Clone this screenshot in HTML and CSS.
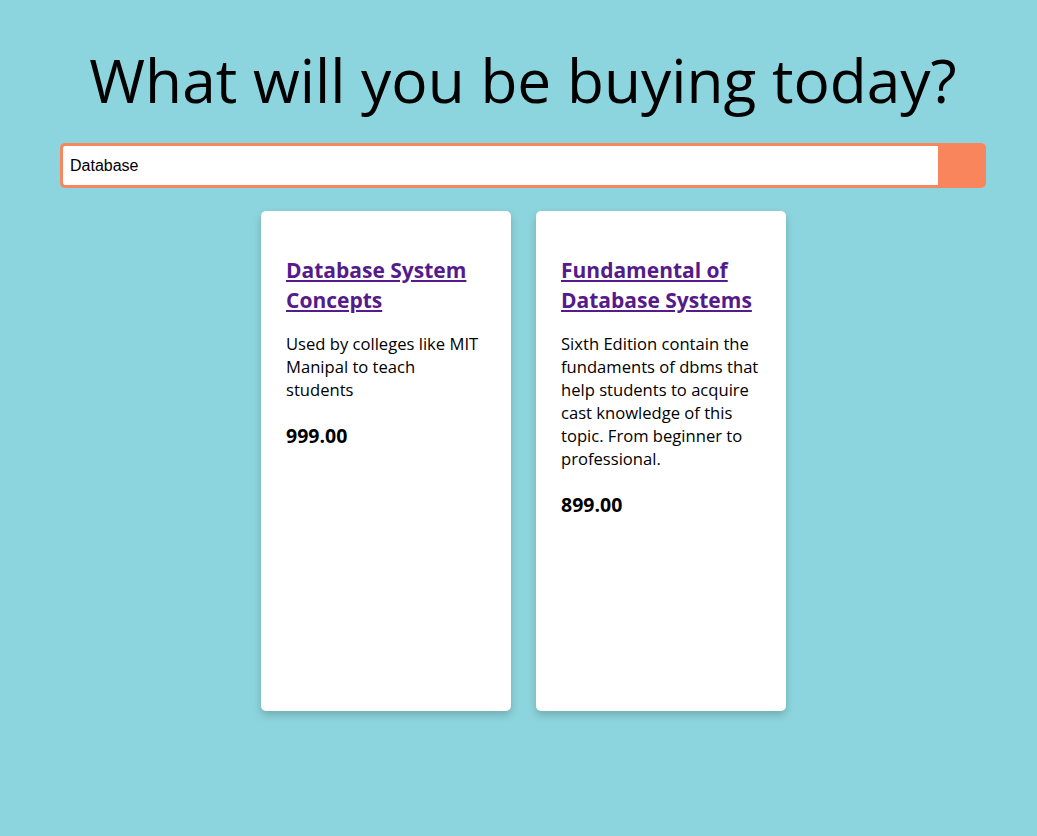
FILE: index.html
```html
<!DOCTYPE html>
<html lang="en">
<head>
<meta charset="utf-8">
<title>Shop</title>
<link rel="stylesheet" href="styles.css">
</head>
<body>
<div class="page">
  <h1 class="heading">What will you be buying today?</h1>
  <form class="search">
    <input class="search-input" type="text" value="Database">
    <button class="search-btn" type="button" aria-label="Search"></button>
  </form>
  <div class="cards">
    <div class="card">
      <a class="card-title" href="#">Database System Concepts</a>
      <p class="card-desc">Used by colleges like MIT Manipal to teach students</p>
      <p class="card-price">999.00</p>
    </div>
    <div class="card">
      <a class="card-title" href="#">Fundamental of Database Systems</a>
      <p class="card-desc">Sixth Edition contain the fundaments of dbms that help students to acquire cast knowledge of this topic. From beginner to professional.</p>
      <p class="card-price">899.00</p>
    </div>
  </div>
</div>
</body>
</html>
```

FILE: styles.css
```css
html, body {
  margin: 0;
  padding: 0;
}
body {
  background: #8dd5de;
  font-family: "Open Sans", "Noto Sans", sans-serif;
  color: #000;
  min-height: 836px;
}
.page {
  padding: 36px 51px 0 60px;
}
.heading {
  margin: 0;
  text-align: center;
  font-weight: 400;
  font-size: 60.4px;
  line-height: 88px;
  letter-spacing: 0;
  padding-left: 0;
}
.search {
  display: flex;
  margin-top: 19px;
  height: 45px;
}
.search-input {
  flex: 1;
  box-sizing: border-box;
  height: 45px;
  border: 3px solid #f8875f;
  border-right: none;
  border-radius: 5px 0 0 5px;
  padding: 0 7px;
  font-family: "Liberation Sans", Arial, sans-serif;
  font-size: 16px;
  color: #000;
  background: #fff;
  outline: none;
}
.search-btn {
  width: 48px;
  height: 45px;
  border: none;
  background: #f8855c;
  border-radius: 0 5px 5px 0;
  padding: 0;
}
.cards {
  display: flex;
  gap: 25px;
  margin-top: 23px;
  padding-left: 201px;
}
.card {
  box-sizing: border-box;
  width: 250px;
  height: 500px;
  background: #fff;
  border-radius: 5px;
  box-shadow: 0 4px 8px rgba(0, 0, 0, 0.2);
  padding: 44px 26px 25px 25px;
}
.card-title {
  display: block;
  color: #551a8b;
  font-weight: 700;
  font-size: 21px;
  line-height: 30px;
  text-decoration: underline;
}
.card-desc {
  margin: 17px 0 0;
  font-size: 16.6px;
  line-height: 23px;
}
.card-price {
  margin: 22px 0 0;
  font-weight: 700;
  font-size: 19.5px;
  line-height: 26px;
}
```
